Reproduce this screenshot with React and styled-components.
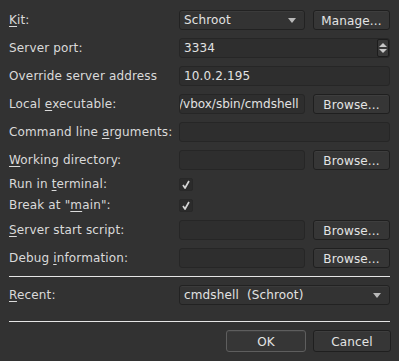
import React from "react";
import styled, { createGlobalStyle } from "styled-components";

const Global = createGlobalStyle`
  html, body {
    margin: 0;
    padding: 0;
    background: #323232;
  }
  body {
    font-family: "DejaVu Sans", "Liberation Sans", sans-serif;
    font-size: 12px;
    letter-spacing: 0.15px;
    color: #dadada;
  }
`;

const Dialog = styled.div`
  width: 399px;
  height: 361px;
  box-sizing: border-box;
  padding: 10px 9px 8px 9px;
  background: #323232;
  display: flex;
  flex-direction: column;
`;

const Form = styled.div`
  display: grid;
  grid-template-columns: 162px 126px 77px;
  column-gap: 8px;
  row-gap: 8px;
  align-items: center;
`;

const Label = styled.label`
  grid-column: 1;
  height: ${(p) => (p.$small ? 13 : 20)}px;
  line-height: ${(p) => (p.$small ? 13 : 20)}px;
  white-space: nowrap;
  color: #dadada;

  u {
    text-decoration: underline;
    text-underline-offset: 2px;
  }
`;

const Field = styled.div`
  grid-column: ${(p) => (p.$wide ? "2 / 4" : "2 / 3")};
  height: 20px;
  box-sizing: border-box;
  border: 1px solid #262626;
  border-radius: 3px;
  background: #2e2e2e;
  color: #e2e2e2;
  line-height: 18px;
  padding: 0 4px;
  white-space: nowrap;
  overflow: hidden;
  position: relative;
  ${(p) => p.$clip && "padding-left: 0; text-indent: -1px; letter-spacing: 0;"}
`;

const Combo = styled.div`
  grid-column: ${(p) => (p.$wide ? "2 / 4" : "2 / 3")};
  height: 20px;
  box-sizing: border-box;
  border: 1px solid #222;
  border-radius: 3px;
  background: #333;
  box-shadow: inset 0 1px 0 #3b3b3b;
  color: #e2e2e2;
  display: flex;
  align-items: center;
  justify-content: space-between;
  padding: 0 8px 0 4px;
  white-space: pre;
`;

const Arrow = styled.span`
  width: 0;
  height: 0;
  border-left: 4px solid transparent;
  border-right: 4px solid transparent;
  border-top: 5px solid #b9b9b9;
  margin-top: 1px;
`;

const Button = styled.div`
  height: ${(p) => (p.$tall ? 22 : 20)}px;
  width: ${(p) => (p.$w ? `${p.$w}px` : "auto")};
  box-sizing: border-box;
  border: 1px solid ${(p) => (p.$default ? "#5e5e5e" : "#1f1f1f")};
  border-radius: 3px;
  background: #363636;
  box-shadow: inset 0 1px 0 #3e3e3e;
  color: #e4e4e4;
  display: flex;
  align-items: center;
  justify-content: center;
  padding-top: 1px;
  white-space: nowrap;
`;

const Spin = styled.div`
  position: absolute;
  right: 0;
  top: 0;
  bottom: 0;
  width: 12px;
  border: 1px solid #1c1c1c;
  border-radius: 2px;
  background: #393939;
  display: flex;
  flex-direction: column;
  align-items: center;
  justify-content: center;
  gap: 2px;
  box-sizing: border-box;
`;

const SpinArrow = styled.span`
  width: 0;
  height: 0;
  border-left: 4px solid transparent;
  border-right: 4px solid transparent;
  ${(p) =>
    p.$up
      ? "border-bottom: 4px solid #c8c8c8;"
      : "border-top: 4px solid #c8c8c8;"}
`;

const Check = styled.div`
  grid-column: 2 / 3;
  width: 14px;
  height: 13px;
  box-sizing: border-box;
  border: 1px solid #282828;
  border-radius: 2px;
  background: #2b2b2b;
  display: flex;
  align-items: center;
  justify-content: center;
`;

const Separator = styled.div`
  grid-column: 1 / -1;
  height: 1px;
  background: #e6e6e6;
  margin: ${(p) => p.$m || "0"};
`;

const Footer = styled.div`
  display: flex;
  justify-content: flex-end;
  gap: 7px;
  margin-top: 8px;
  margin-right: -1px;
`;

const Tick = () => (
  <svg width="8" height="9" viewBox="0 0 8 9">
    <path
      d="M1 5 L3 8 L7 1"
      fill="none"
      stroke="#d4d4d4"
      strokeWidth="1.7"
      strokeLinejoin="round"
    />
  </svg>
);

export default function App() {
  return (
    <Dialog>
      <Global />
      <Form>
        <Label>
          <u>K</u>it:
        </Label>
        <Combo>
          Schroot
          <Arrow />
        </Combo>
        <Button>Manage...</Button>

        <Label>Server port:</Label>
        <Field $wide>
          3334
          <Spin>
            <SpinArrow $up />
            <SpinArrow />
          </Spin>
        </Field>

        <Label>Override server address</Label>
        <Field $wide>10.0.2.195</Field>

        <Label>
          Local <u>e</u>xecutable:
        </Label>
        <Field $clip>/vbox/sbin/cmdshell</Field>
        <Button>Browse...</Button>

        <Label>
          Command line <u>a</u>rguments:
        </Label>
        <Field $wide />

        <Label>
          <u>W</u>orking directory:
        </Label>
        <Field />
        <Button>Browse...</Button>

        <Label $small>
          Run in <u>t</u>erminal:
        </Label>
        <Check>
          <Tick />
        </Check>

        <Label $small>
          Break at "<u>m</u>ain":
        </Label>
        <Check>
          <Tick />
        </Check>

        <Label>
          <u>S</u>erver start script:
        </Label>
        <Field />
        <Button>Browse...</Button>

        <Label>
          Debug <u>i</u>nformation:
        </Label>
        <Field />
        <Button>Browse...</Button>

        <Separator />

        <Label>
          <u>R</u>ecent:
        </Label>
        <Combo $wide>
          {"cmdshell  (Schroot)"}
          <Arrow />
        </Combo>

        <Separator $m="8px 0 0 0" />
      </Form>
      <Footer>
        <Button $default $tall $w={80}>
          OK
        </Button>
        <Button $tall $w={78}>
          Cancel
        </Button>
      </Footer>
    </Dialog>
  );
}
